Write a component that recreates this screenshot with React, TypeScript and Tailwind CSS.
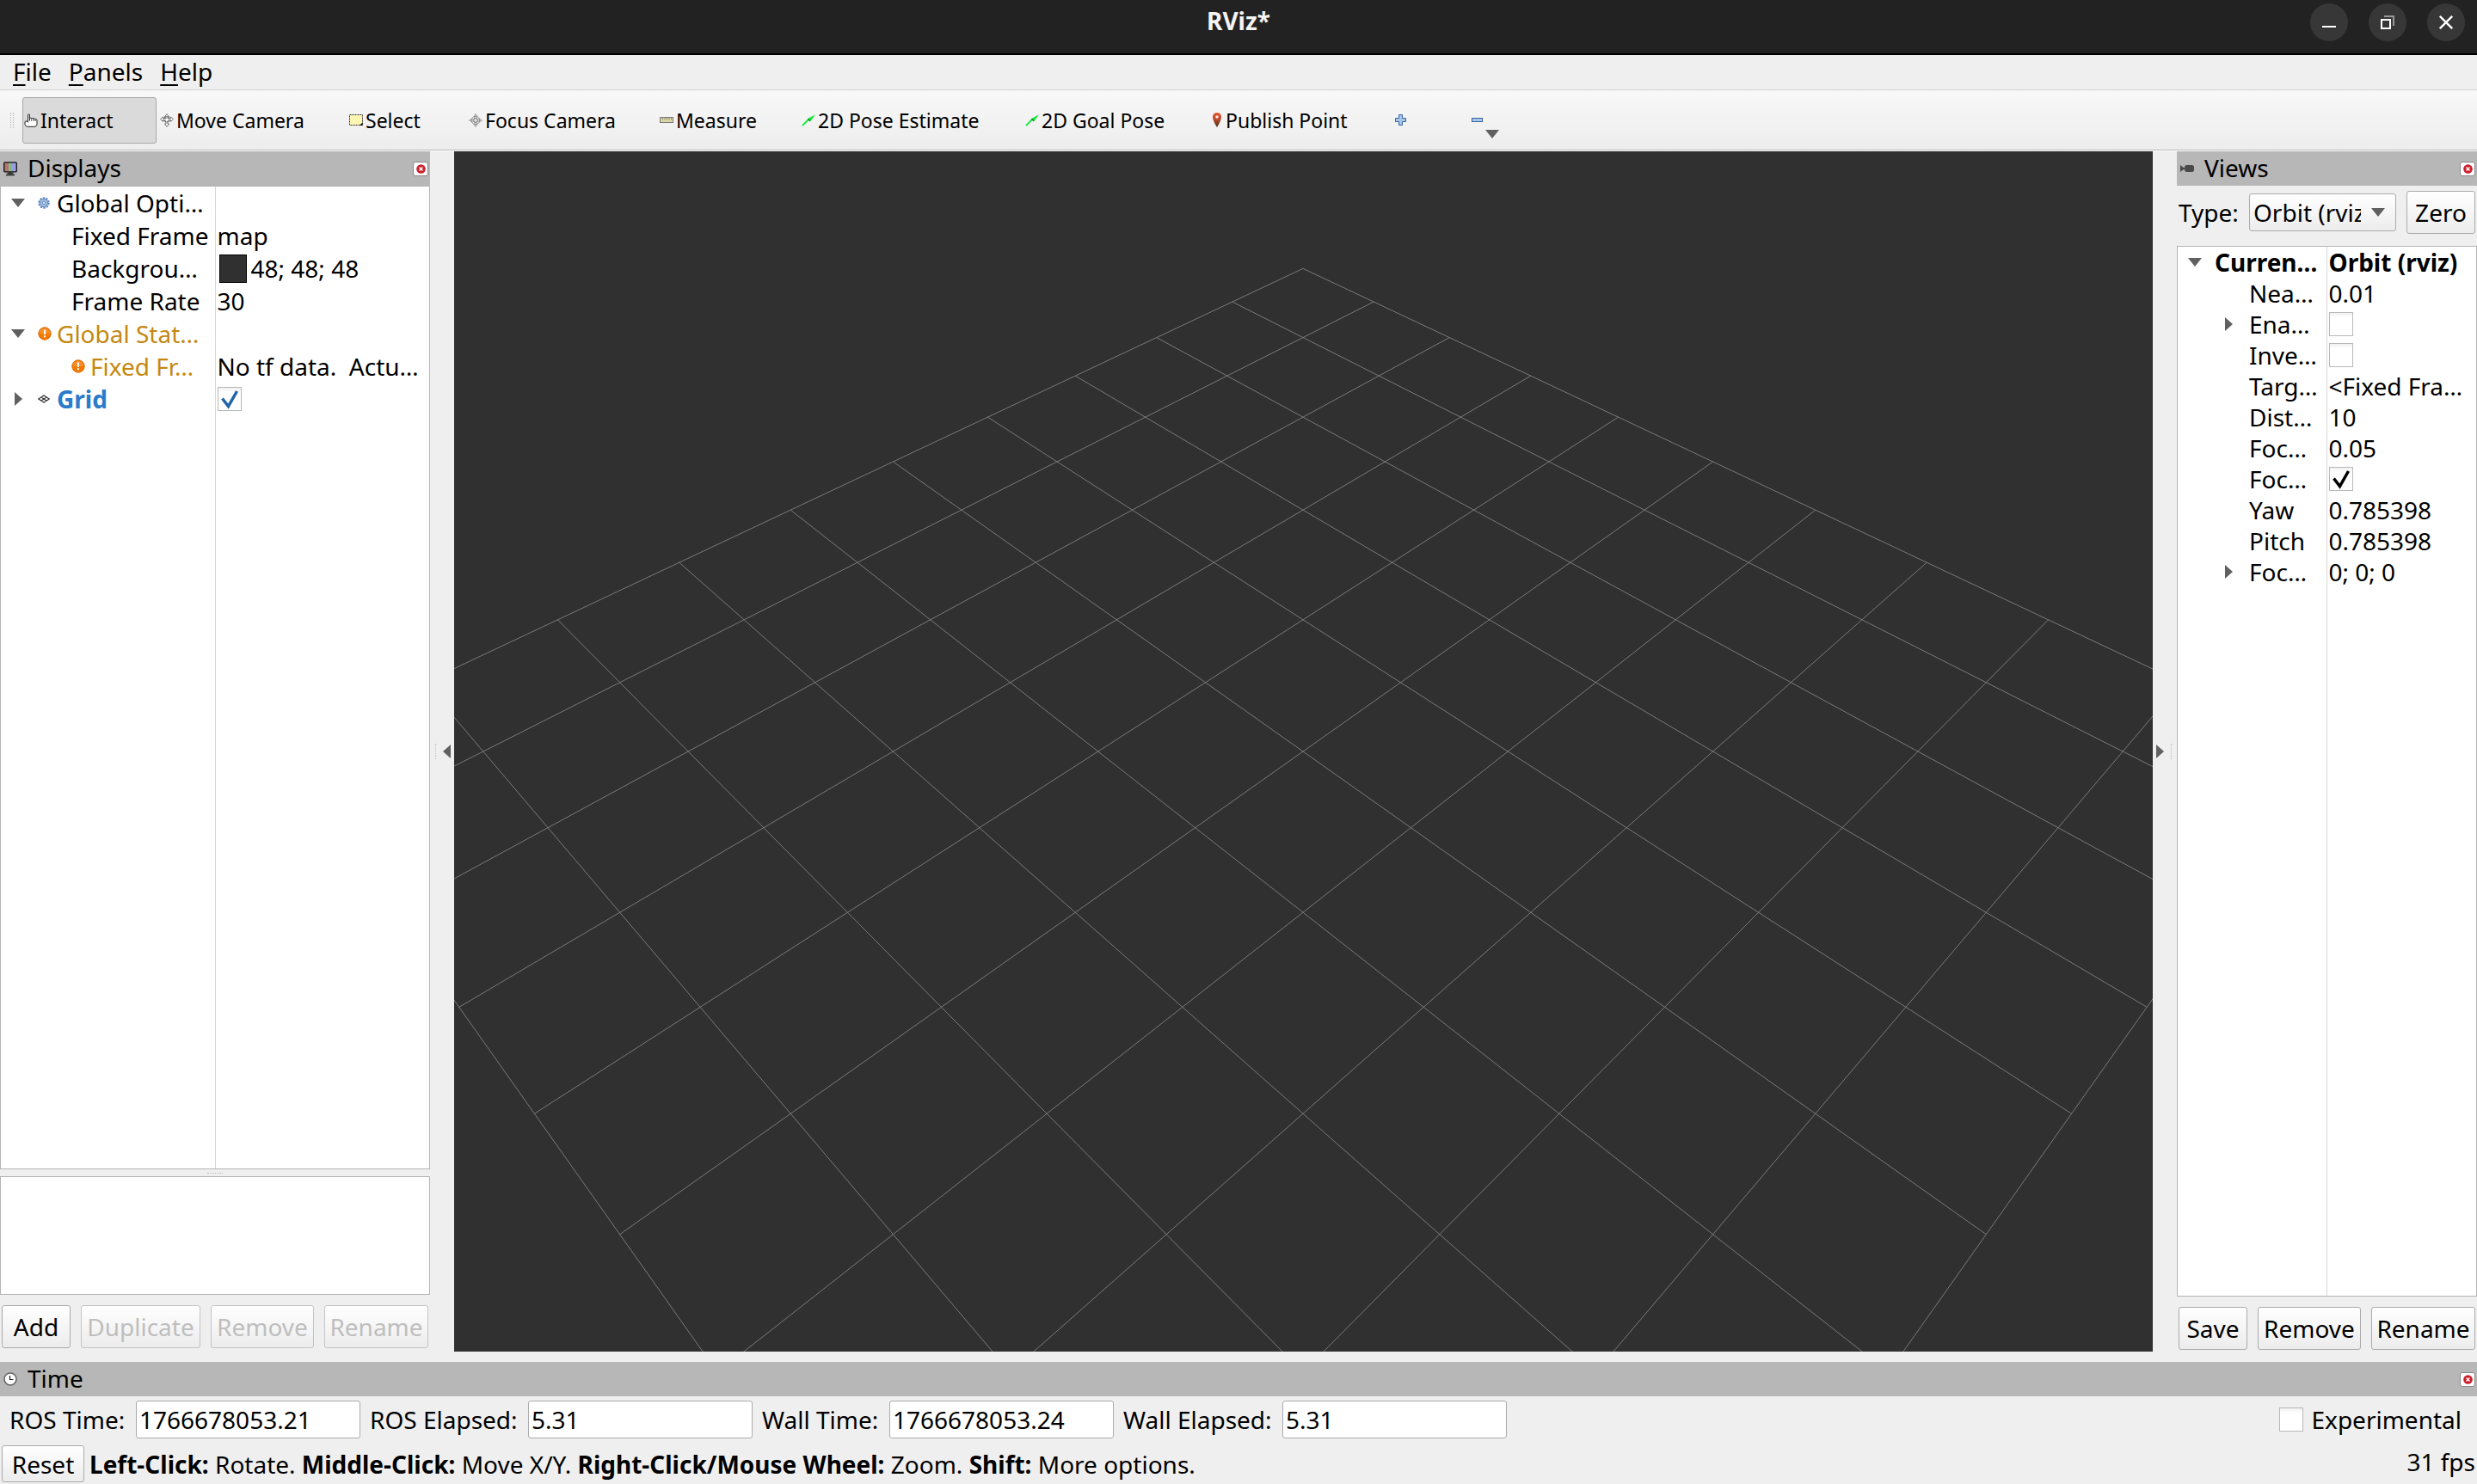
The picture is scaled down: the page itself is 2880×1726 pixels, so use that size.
import type { ReactNode } from 'react';
import clsx from 'clsx';

type Row = {
  label: string;
  value?: ReactNode;
  arrow?: 'down' | 'right';
  icon?: ReactNode;
  child?: boolean;
  bold?: boolean;
  boldValue?: boolean;
  color?: string;
};

const Triangle = ({ dir, className }: { dir: 'down' | 'right' | 'left'; className?: string }) => {
  const points = {
    down: '0,0 16,0 8,10',
    right: '0,0 9,8 0,16',
    left: '9,0 0,8 9,16',
  };
  return (
    <svg
      width={dir === 'down' ? 16 : 9}
      height={dir === 'down' ? 10 : 16}
      className={clsx('shrink-0', className)}
      fill="#606060"
      aria-hidden="true"
    >
      <polygon points={points[dir]} />
    </svg>
  );
};

const HandIcon = () => (
  <svg width="16" height="16" viewBox="0 0 16 16" fill="#fff" stroke="#222" strokeWidth="1">
    <path d="M4.5 10V2Q4.5.8 5.5.8T6.5 2V6Q6.7 5 7.6 5.1T8.6 6Q9 5.2 10 5.4T10.8 6.4Q11.3 5.6 12.2 5.9T13 7Q13.6 6.4 14.4 6.8T15 8V12.5Q15 14.5 13 15.3H3.5Q1.5 14.8 1 12.5V10Q1.5 8 3 9L4.5 10Z" />
    <path d="M6.5 6V8.5M8.6 6.5V8.5M10.8 6.5V8.5M13 7V9" fill="none" />
  </svg>
);

const MoveIcon = () => (
  <svg width="16" height="16" viewBox="0 0 16 16" fill="#fff" stroke="#666" strokeWidth=".9">
    <path d="M8 .6 10.6 4H9V6Q10.5 6 12.5 5.8V4L15.5 6.5 12.6 9.4V7.8Q11 8.5 9 8.8V12H10.6L8 15.4 5.4 12H7V8.8Q5 8.5 3.4 7.8V9.4L.5 6.5 3.5 4V5.8Q5.5 6 7 6V4H5.4Z" />
    <path d="M5 4.5Q8 2.6 11 4.5V9Q8 11 5 9Z" fill="none" strokeDasharray="1.5 1" stroke="#333" />
  </svg>
);

const SelectIcon = () => (
  <svg width="16" height="16" viewBox="0 0 16 16">
    <rect x=".5" y="1.5" width="15" height="12" fill="#fff5b3" stroke="#333" strokeDasharray="2 1" />
    <path d="M15.5 10.5V14H12Z" fill="#000" />
  </svg>
);

const FocusIcon = () => (
  <svg width="16" height="16" viewBox="0 0 16 16" fill="none" stroke="#888" strokeWidth="1">
    <path d="M8 .5 9.2 2.5V6.8H13.5L15.5 8 13.5 9.2H9.2V13.5L8 15.5 6.8 13.5V9.2H2.5L.5 8 2.5 6.8H6.8V2.5Z" fill="#e4e4e4" strokeWidth=".8" />
    <circle cx="8" cy="8" r="4.8" />
    <circle cx="8" cy="8" r="2.4" />
  </svg>
);

const MeasureIcon = () => (
  <svg width="16" height="16" viewBox="0 0 16 16">
    <rect x=".5" y="4.5" width="15" height="6" fill="#e0d8a8" stroke="#777" />
    <path d="M3.5 5V7.5M6 5V7.5M8.5 5V7.5M11 5V7.5M13.5 5V7.5" stroke="#776" strokeWidth=".8" />
  </svg>
);

const PoseIcon = () => (
  <svg width="16" height="16" viewBox="0 0 16 16">
    <path d="M1 14.2 8 6.8" stroke="#0ae834" strokeWidth="1.8" />
    <path d="M16 1.2 6.8 6.2 10.4 9Z" fill="#0ae834" />
    <path d="M7.5 6.5 10 8.8" stroke="#067a1e" strokeWidth="1.2" />
  </svg>
);

const PinIcon = () => (
  <svg width="14" height="17" viewBox="-2 0 14 17">
    <defs>
      <linearGradient id="pin" x1="0" y1="0" x2="0" y2="1">
        <stop offset="0" stopColor="#e8502c" />
        <stop offset=".5" stopColor="#b5482a" />
        <stop offset="1" stopColor="#3c3018" />
      </linearGradient>
    </defs>
    <path d="M5 0Q10 .3 10 5.5 9.5 10 5 17 .5 10 0 5.5 0 .3 5 0Z" fill="url(#pin)" />
    <circle cx="5" cy="5" r="1.8" fill="#f6e4de" />
  </svg>
);

const PlusIcon = () => (
  <svg width="13" height="13" viewBox="0 0 13 13">
    <path d="M4.5.5H8.5V4.5H12.5V8.5H8.5V12.5H4.5V8.5H.5V4.5H4.5Z" fill="#a8c4e6" stroke="#3465a4" />
  </svg>
);

const MinusIcon = () => (
  <svg width="13" height="13" viewBox="0 0 13 13">
    <rect x=".5" y="4.5" width="12" height="4" fill="#a8c4e6" stroke="#3465a4" />
  </svg>
);

const MonitorIcon = () => (
  <svg width="16" height="17" viewBox="0 0 16 17">
    <rect x="1" y="1" width="5" height="10.5" fill="#b47474" />
    <rect x="6" y="1" width="4" height="10.5" fill="#7cc07c" />
    <rect x="10" y="1" width="5" height="10.5" fill="#9c9ce0" />
    <rect x=".7" y=".8" width="14.6" height="11" rx="1" fill="none" stroke="#111" strokeWidth="1.3" />
    <path d="M8 12V14.5M4.5 13.5H11.5M3 15.5H13" stroke="#222" strokeWidth="1.3" />
  </svg>
);

const CameraIcon = () => (
  <svg width="16" height="10" viewBox="0 0 16 10" fill="#4a4a4a">
    <path d="M0 1 4 4V6L0 9Z" />
    <rect x="5" y="1" width="11" height="8" rx="2.5" />
    <rect x="3" y="4" width="4" height="2" />
  </svg>
);

const ClockIcon = () => (
  <svg width="16" height="16" viewBox="0 0 16 16">
    <circle cx="8" cy="8" r="7" fill="#fff" stroke="#666" strokeWidth="1.6" />
    <path d="M7.5 4V8.5H11.5" fill="none" stroke="#222" strokeWidth="1.2" />
  </svg>
);

const GearIcon = () => (
  <svg width="14" height="14" viewBox="0 0 14 14">
    <circle cx="7" cy="7" r="5.6" fill="none" stroke="#5b84bd" strokeWidth="2.2" strokeDasharray="2.2 1.3" />
    <circle cx="7" cy="7" r="4.6" fill="#a9c2e4" stroke="#5b84bd" />
    <circle cx="7" cy="7" r="1.8" fill="#dfe9f6" stroke="#5b84bd" />
  </svg>
);

const WarnIcon = () => (
  <svg width="16" height="16" viewBox="0 0 16 16">
    <circle cx="8" cy="8" r="7.2" fill="#f57900" stroke="#d96a05" />
    <path d="M1.8 7.5Q2.5 2 8 1.8 13.5 2 14.2 7.5 8 9 1.8 7.5Z" fill="#f88f2a" />
    <path d="M7 3.5H9V9H7ZM7 10.2H9V12.2H7Z" fill="#fff" />
  </svg>
);

const GridIcon = () => (
  <svg width="14" height="10" viewBox="0 0 14 10" fill="none" stroke="#333" strokeWidth="1.2">
    <path d="M.8 5 7 1 13.2 5 7 9ZM3.9 3 10.1 7M10.1 3 3.9 7" />
  </svg>
);

const CheckBox = ({ id, label, checked, color = '#000' }: { id: string; label?: string; checked?: boolean; color?: string }) => (
  <span className="relative block size-7 shrink-0">
    <input
      id={id}
      type="checkbox"
      aria-label={label}
      defaultChecked={checked}
      className="peer block size-7 appearance-none border border-[#b8b8b8] bg-linear-to-b from-[#f0f0f0] to-white to-20%"
    />
    <svg viewBox="0 0 28 28" className="pointer-events-none absolute inset-0 hidden peer-checked:block" aria-hidden="true">
      <path d="M5.5 13.5 12.5 22.5 22.5 5" fill="none" stroke={color} strokeWidth="3.5" />
    </svg>
  </span>
);

const Button = ({ children, disabled, className }: { children: ReactNode; disabled?: boolean; className?: string }) => (
  <button
    disabled={disabled}
    className={clsx(
      'rounded-[3px] border bg-linear-to-b from-white to-[#ececec] text-center',
      disabled ? 'border-[#c4c4c4] text-[#bebebe]' : 'border-[#ababab]',
      className,
    )}
  >
    {children}
  </button>
);

const DockTitle = ({ icon, title }: { icon: ReactNode; title: string }) => (
  <div className="flex h-10 shrink-0 items-center bg-[#b7b7b7] pr-[2px] pl-1">
    <span className="flex w-7 shrink-0 items-center">{icon}</span>
    <h2 className="flex-1 pb-[2px]">{title}</h2>
    <button
      aria-label={`Close ${title}`}
      className="flex h-[17px] w-[18px] items-center justify-center rounded-[3px] border border-[#888] bg-white"
    >
      <svg width="11" height="11" viewBox="0 0 11 11">
        <circle cx="5.5" cy="5.5" r="5.3" fill="#cc1f2b" />
        <path d="M3.5 3.5 7.5 7.5M7.5 3.5 3.5 7.5" stroke="#fff" strokeWidth="1.5" />
      </svg>
    </button>
  </div>
);

const Dots = ({ vertical }: { vertical?: boolean }) => (
  <span
    className={clsx(
      'block border-[#bbb]',
      vertical ? 'h-[18px] border-l border-dotted' : 'w-[18px] border-t border-dotted',
    )}
  />
);

// Strip beside the viewport: drag handle plus the collapse arrow.
const SideStrip = ({ side }: { side: 'left' | 'right' }) => (
  <div className={clsx('flex w-7 shrink-0 items-center gap-2 pb-3', side === 'left' ? 'pl-[6px]' : 'flex-row-reverse pr-[6px]')}>
    <Dots vertical />
    <button aria-label={`Hide ${side} dock`}>
      <Triangle dir={side} />
    </button>
  </div>
);

const PropertyTree = ({ rows, kind }: { rows: Row[]; kind: 'displays' | 'views' }) => {
  const displays = kind === 'displays';
  return (
    <div className="min-h-0 flex-1 border border-[#b4b4b4] bg-white">
      <table className="h-full w-full table-fixed border-collapse">
        <tbody>
          {rows.map((row, i) => (
            <tr key={i} className={displays ? 'h-[38px]' : 'h-9'}>
              <td
                className={clsx(
                  'overflow-hidden border-r border-[#d8d8d8] p-0 whitespace-nowrap',
                  displays ? 'w-[249px]' : 'w-[173px]',
                )}
              >
                <div className={clsx('flex items-center', row.color, row.bold && 'font-bold')}>
                  <span
                    className={clsx(
                      'flex shrink-0 items-center',
                      displays && (row.child ? 'w-[82px]' : 'w-[43px] pl-3'),
                      !displays && (row.child ? 'w-[83px] pl-[55px]' : 'w-[43px] pl-3'),
                    )}
                  >
                    {row.arrow && <Triangle dir={row.arrow} className={row.arrow === 'right' && displays ? 'ml-1' : ''} />}
                  </span>
                  {row.icon && <span className="flex w-[22px] shrink-0">{row.icon}</span>}
                  <span>{row.label}</span>
                </div>
              </td>
              <td className={clsx('overflow-hidden py-0 pr-0 pl-[2px] whitespace-pre', row.boldValue && 'font-bold')}>
                {row.value}
              </td>
            </tr>
          ))}
          <tr>
            <td className="border-r border-[#d8d8d8]" />
            <td />
          </tr>
        </tbody>
      </table>
    </div>
  );
};

const displayRows: Row[] = [
  { label: 'Global Opti…', arrow: 'down', icon: <GearIcon /> },
  { label: 'Fixed Frame', child: true, value: 'map' },
  {
    label: 'Backgrou…',
    child: true,
    value: (
      <span className="flex items-center gap-[5px] pl-[2px]">
        <span className="h-[33px] w-8 border border-black bg-[#303030]" />
        48; 48; 48
      </span>
    ),
  },
  { label: 'Frame Rate', child: true, value: '30' },
  { label: 'Global Stat…', arrow: 'down', icon: <WarnIcon />, color: 'text-[#c48810]' },
  { label: 'Fixed Fr…', child: true, icon: <WarnIcon />, color: 'text-[#c48810]', value: 'No tf data.  Actu…' },
  {
    label: 'Grid',
    arrow: 'right',
    icon: <GridIcon />,
    bold: true,
    color: 'text-[#2a7bcb]',
    value: <CheckBox id="grid" label="Grid" checked color="#1f64a8" />,
  },
];

const viewRows: Row[] = [
  { label: 'Curren…', arrow: 'down', bold: true, boldValue: true, value: 'Orbit (rviz)' },
  { label: 'Nea…', child: true, value: '0.01' },
  { label: 'Ena…', child: true, arrow: 'right', value: <CheckBox id="enable" label="Enable" /> },
  { label: 'Inve…', child: true, value: <CheckBox id="invert" label="Invert" /> },
  { label: 'Targ…', child: true, value: '<Fixed Fra…' },
  { label: 'Dist…', child: true, value: '10' },
  { label: 'Foc…', child: true, value: '0.05' },
  { label: 'Foc…', child: true, value: <CheckBox id="focal" label="Focal" checked /> },
  { label: 'Yaw', child: true, value: '0.785398' },
  { label: 'Pitch', child: true, value: '0.785398' },
  { label: 'Foc…', child: true, arrow: 'right', value: '0; 0; 0' },
];

const tools = [
  { label: 'Interact', icon: <HandIcon />, width: 'w-[156px]', active: true },
  { label: 'Move Camera', icon: <MoveIcon />, width: 'w-[218px]' },
  { label: 'Select', icon: <SelectIcon />, width: 'w-[137px]' },
  { label: 'Focus Camera', icon: <FocusIcon />, width: 'w-[220px]' },
  { label: 'Measure', icon: <MeasureIcon />, width: 'w-[163px]' },
  { label: '2D Pose Estimate', icon: <PoseIcon />, width: 'w-[258px]' },
  { label: '2D Goal Pose', icon: <PoseIcon />, width: 'w-[214px]' },
  { label: 'Publish Point', icon: <PinIcon />, width: 'w-[212px]' },
];

// Ground grid seen by the orbit camera: 10 m away, yaw and pitch 45 degrees.
const FOCAL = 1685;
const DISTANCE = 10;

const project = (x: number, y: number) => {
  const depth = (x + y) / 2;
  const scale = FOCAL / (DISTANCE + depth);
  return { x: ((x - y) / Math.SQRT2) * scale, y: -depth * scale };
};

const GroundGrid = () => {
  const lines = [];
  for (let i = -5; i <= 5; i++) {
    lines.push([project(i, -5), project(i, 5)], [project(-5, i), project(5, i)]);
  }
  return (
    <svg viewBox="-987 -698 1975 1396" preserveAspectRatio="xMidYMid slice" className="h-full w-full" role="img" aria-label="Grid">
      {lines.map(([a, b], i) => (
        <line key={i} x1={a.x} y1={a.y} x2={b.x} y2={b.y} stroke="#7a7a7a" strokeWidth="1" />
      ))}
    </svg>
  );
};

const timeFields = [
  { id: 'ros-time', label: 'ROS Time:', value: '1766678053.21', width: 'w-[146px]' },
  { id: 'ros-elapsed', label: 'ROS Elapsed:', value: '5.31', width: 'w-[183px]' },
  { id: 'wall-time', label: 'Wall Time:', value: '1766678053.24', width: 'w-[147px]' },
  { id: 'wall-elapsed', label: 'Wall Elapsed:', value: '5.31', width: 'w-[184px]' },
];

const windowButton = 'flex size-11 items-center justify-center rounded-full bg-[#373737]';

const App = () => {
  return (
    <div className="flex h-screen flex-col overflow-hidden bg-[#efefef] font-['Noto_Sans','Open_Sans',sans-serif] text-[28px] leading-9 text-black">
      <header className="grid h-16 shrink-0 grid-cols-[1fr_auto_1fr] items-start border-b-2 border-black bg-[#222]">
        <h1 className="col-start-2 pt-[6px] font-bold text-[#f4f4f4]">RViz*</h1>
        <div className="flex justify-end gap-6 pt-1 pr-[14px]">
          <button aria-label="Minimize" className={windowButton}>
            <svg width="16" height="16" viewBox="0 0 16 16">
              <rect y="12" width="16" height="2" fill="#fff" />
            </svg>
          </button>
          <button aria-label="Restore" className={windowButton}>
            <svg width="16" height="16" viewBox="0 0 16 16" fill="none" strokeWidth="2">
              <path d="M4 1H15V12" stroke="#999" />
              <rect x="1" y="5" width="10" height="10" stroke="#fff" />
            </svg>
          </button>
          <button aria-label="Close" className={windowButton}>
            <svg width="16" height="16" viewBox="0 0 16 16" stroke="#fff" strokeWidth="2.4">
              <path d="M.8.8 15.2 15.2M15.2.8.8 15.2" />
            </svg>
          </button>
        </div>
      </header>

      <nav className="flex h-[41px] shrink-0 items-center gap-5 border-b border-[#d3d3d3] px-[15px] pb-[2px]">
        {['File', 'Panels', 'Help'].map((item) => (
          <button key={item}>
            <span className="underline decoration-2 underline-offset-4">{item[0]}</span>
            {item.slice(1)}
          </button>
        ))}
      </nav>

      <div className="flex h-[70px] shrink-0 items-center border-b border-[#b8b8b8] bg-linear-to-b from-[#f8f8f8] to-[#ededed] pl-3 text-[23px]">
        <div className="flex w-[14px] gap-[2px]">
          <Dots vertical />
          <Dots vertical />
        </div>
        <div className="flex gap-[2px]">
          {tools.map((tool) => (
            <button
              key={tool.label}
              className={clsx(
                'flex h-[54px] items-center gap-[3px] rounded-[3px] border pl-px whitespace-nowrap',
                tool.width,
                tool.active ? 'border-[#a8a8a8] bg-[#dadada]' : 'border-transparent',
              )}
            >
              {tool.icon}
              {tool.label}
            </button>
          ))}
          <button aria-label="Add tool" className="flex h-[54px] w-[89px] items-center pl-[2px]">
            <PlusIcon />
          </button>
          <button aria-label="Remove tool" className="relative flex h-[54px] w-9 items-center">
            <MinusIcon />
            <Triangle dir="down" className="absolute right-1 bottom-[6px]" />
          </button>
        </div>
      </div>

      <main className="flex min-h-0 flex-1 border-t border-white">
        <aside className="flex w-[500px] shrink-0 flex-col">
          <DockTitle icon={<MonitorIcon />} title="Displays" />
          <PropertyTree rows={displayRows} kind="displays" />
          <div className="flex h-2 shrink-0 items-center justify-center">
            <Dots />
          </div>
          <div className="h-[138px] shrink-0 border border-[#b4b4b4] bg-white" />
          <div className="mt-3 mb-4 flex shrink-0 gap-3 px-[2px]">
            <Button className="h-[50px] w-20">Add</Button>
            <Button disabled className="h-[50px] w-[139px]">Duplicate</Button>
            <Button disabled className="h-[50px] w-[120px]">Remove</Button>
            <Button disabled className="h-[50px] flex-1">Rename</Button>
          </div>
        </aside>

        <SideStrip side="left" />

        <section className="mb-3 min-w-0 flex-1 overflow-hidden bg-[#303030]">
          <GroundGrid />
        </section>

        <SideStrip side="right" />

        <aside className="flex w-[349px] shrink-0 flex-col">
          <DockTitle icon={<CameraIcon />} title="Views" />
          <div className="flex shrink-0 items-center gap-3 px-[2px] pt-[6px] pb-[14px]">
            <label htmlFor="view-type" className="w-[70px]">Type:</label>
            <div className="relative flex-1">
              <select
                id="view-type"
                className="block h-11 w-full appearance-none rounded-[3px] border border-[#ababab] bg-linear-to-b from-white to-[#ececec] pr-10 pl-1"
              >
                <option>Orbit (rviz)</option>
              </select>
              <Triangle dir="down" className="pointer-events-none absolute top-[17px] right-[13px]" />
            </div>
            <Button className="h-[50px] w-20">Zero</Button>
          </div>
          <PropertyTree rows={viewRows} kind="views" />
          <div className="mt-3 mb-[14px] flex shrink-0 gap-3 px-[2px]">
            <Button className="h-[50px] w-20">Save</Button>
            <Button className="h-[50px] w-[120px]">Remove</Button>
            <Button className="h-[50px] flex-1">Rename</Button>
          </div>
        </aside>
      </main>

      <footer className="shrink-0">
        <DockTitle icon={<ClockIcon />} title="Time" />
        <div className="flex items-center pt-[5px] pr-[18px]">
          {timeFields.map((field) => (
            <div key={field.id} className="flex items-center">
              <label htmlFor={field.id} className={clsx('mr-3 pl-[11px] whitespace-nowrap', field.width)}>
                {field.label}
              </label>
              <input
                id={field.id}
                defaultValue={field.value}
                className="h-11 w-[261px] rounded-[3px] border border-[#ababab] bg-white px-[3px]"
              />
            </div>
          ))}
          <div className="ml-auto flex items-center gap-[10px]">
            <CheckBox id="experimental" />
            <label htmlFor="experimental">Experimental</label>
          </div>
        </div>
        <div className="flex items-center pt-2 pr-[2px] pb-[2px] pl-[2px]">
          <Button className="mr-[6px] h-[43px] w-24">Reset</Button>
          <p>
            <b>Left-Click:</b> Rotate. <b>Middle-Click:</b> Move X/Y. <b>Right-Click/Mouse Wheel:</b> Zoom. <b>Shift:</b> More options.
          </p>
          <span className="ml-auto pb-[6px]">31 fps</span>
        </div>
      </footer>
    </div>
  );
};

export default App;
